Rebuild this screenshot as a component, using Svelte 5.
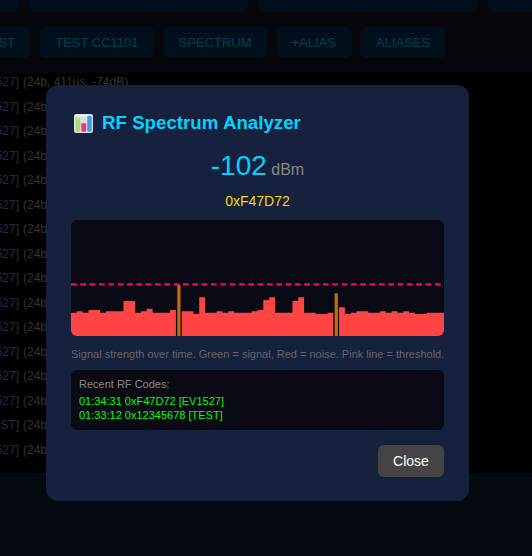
<script>
	// tops of the bars as read off the chart, height = 66 - top / 3
	const tops = [128,124,128,120,120,128,124,124,124,93,93,128,124,116,128,128,128,120,45,124,124,132,82,128,128,124,128,124,128,128,128,124,120,90,82,128,128,128,93,82,128,128,132,132,128,70,112,132,128,124,124,128,128,124,128,124,128,124,128,132,132,128,128,128];
	const signal = [18, 45];
	const barW = 373 / 64;
	const heightOf = (t) => (198 - t) / 3;

	// one path per run of noise bars, so no seams show between neighbours
	const noisePath = () => {
		let d = '';
		let open = false;
		tops.forEach((t, i) => {
			const x = i * barW;
			if (signal.includes(i)) {
				if (open) d += `L${x} 116Z`;
				open = false;
				return;
			}
			const y = 116 - heightOf(t);
			d += open ? `L${x} ${y}L${x + barW} ${y}` : `M${x} 116L${x} ${y}L${x + barW} ${y}`;
			open = true;
		});
		return d + 'L373 116Z';
	};
	const noise = noisePath();
	const hits = signal.map((i) => ({ x: i * barW, h: heightOf(tops[i]) }));

	const buttons = ['TEST', 'TEST CC1101', 'SPECTRUM', '+ALIAS', 'ALIASES'];
	const tags = ['EV1527','EV1527','EV1527','EV1527','EV1527','EV1527','EV1527','EV1527','EV1527','EV1527','EV1527','EV1527','EV1527','EV1527','TEST','EV1527'];
	const codes = ['01:34:31 0xF47D72 [EV1527]', '01:33:12 0x12345678 [TEST]'];
</script>

<div class="page">
	<div class="cards">
		<div class="card"></div>
		<div class="card"></div>
		<div class="card"></div>
		<div class="card"></div>
	</div>

	<div class="buttons">
		{#each buttons as b}
			<button class="btn">{b}</button>
		{/each}
	</div>

	<div class="log">
		<div class="rows">
			{#each tags as tag}
				<div class="row">
					<span class="tag"><span>[{tag}]</span></span>
					<span class="meta">(24b, 411us, -74dB)</span>
				</div>
			{/each}
		</div>
	</div>

	<div class="overlay">
		<div class="modal">
			<h3 class="title">
				<svg class="emoji" viewBox="0 0 19 19" width="19" height="19">
					<rect x="0" y="0" width="19" height="19" rx="2.5" fill="#dcdde6"/>
					<rect x="0.5" y="0.8" width="18" height="1.6" fill="#f4f4f8"/>
					<rect x="1.7" y="4" width="4.6" height="13.7" rx="1" fill="#a3e26c"/>
					<rect x="7.3" y="9.3" width="5" height="8.4" rx="0.6" fill="#ee3a7c"/>
					<rect x="13.3" y="1.7" width="4.4" height="16" rx="1" fill="#3f9be8"/>
				</svg>
				RF Spectrum Analyzer
			</h3>

			<div class="reading"><span class="dbm">-102</span> <span class="unit">dBm</span></div>
			<div class="hex">0xF47D72</div>

			<div class="chart">
				<svg viewBox="0 0 373 116" width="373" height="116">
					<path d={noise} fill="#ff4444"/>
					{#each hits as hit}
						<rect x={hit.x + 1.4} y={116 - hit.h} width="3.2" height={hit.h} fill="#c96c08"/>
					{/each}
					<line x1="0" y1="64.4" x2="373" y2="64.4" stroke="#ff0066" stroke-width="2.2" stroke-dasharray="5.8 3.53"/>
				</svg>
			</div>

			<p class="caption">Signal strength over time. Green = signal, Red = noise. Pink line = threshold.</p>

			<div class="recent">
				<div class="recent-head">Recent RF Codes:</div>
				{#each codes as c}
					<div class="code">{c}</div>
				{/each}
			</div>

			<div class="actions">
				<button class="close">Close</button>
			</div>
		</div>
	</div>
</div>

<style>
	:global(html) {
		background: #0e1a30;
	}
	:global(body) {
		margin: 0;
		height: 556px;
		overflow: hidden;
		font-family: "Liberation Sans", Arial, sans-serif;
	}

	.page {
		position: relative;
		height: 556px;
		overflow: hidden;
		background: linear-gradient(180deg, #18182c, #12223e);
	}

	.cards {
		display: grid;
		grid-template-columns: 220px 220px 218px 220px;
		gap: 10px;
		margin-left: -201px;
		height: 12px;
	}
	.card {
		background: #0c3358;
		border-radius: 0 0 8px 8px;
	}

	.buttons {
		display: flex;
		gap: 10px;
		margin: 15px 0 0 -33px;
	}
	.btn {
		flex: none;
		height: 31px;
		padding: 0 15px;
		border: none;
		border-radius: 6px;
		background: #0c3358;
		color: #00d4ff;
		font: 13px "Liberation Sans", Arial, sans-serif;
	}

	.log {
		height: 400px;
		margin-top: 15px;
		background: #000;
		overflow: hidden;
	}
	.rows {
		margin-top: -3px;
	}
	.row {
		display: flex;
		align-items: center;
		gap: 4px;
		height: 24.5px;
		font-size: 12px;
		white-space: nowrap;
		color: #aaa;
	}
	.tag {
		flex: none;
		width: 19px;
		display: flex;
		justify-content: flex-end;
		color: #9685e6;
	}
	.tag span {
		flex: none;
	}

	.overlay {
		position: absolute;
		inset: 0;
		background: rgba(0, 0, 0, 0.7);
		padding: 85px 0 0 46px;
		box-sizing: border-box;
	}
	.modal {
		width: 423px;
		height: 416px;
		box-sizing: border-box;
		padding: 25px;
		background: #16213e;
		border-radius: 12px;
	}

	.title {
		display: flex;
		align-items: center;
		gap: 9px;
		height: 26px;
		margin: 0 0 0 3px;
		font-size: 18.72px;
		font-weight: bold;
		color: #00d4ff;
	}
	.emoji {
		flex: none;
	}

	.reading {
		margin-top: 13px;
		height: 34px;
		line-height: 34px;
		text-align: center;
		font-size: 16px;
		color: #888;
	}
	.dbm {
		font-size: 28px;
		color: #00d4ff;
	}

	.hex {
		margin-top: 10px;
		text-align: center;
		font-size: 14px;
		line-height: 16px;
		color: #ffd700;
	}

	.chart {
		height: 116px;
		margin-top: 11px;
		background: #0a0a14;
		border-radius: 6px;
		overflow: hidden;
	}
	.chart svg {
		display: block;
	}

	.caption {
		margin: 12px 0 0;
		font-size: 11px;
		line-height: 13px;
		color: #666;
		white-space: nowrap;
	}

	.recent {
		margin-top: 9px;
		height: 60px;
		box-sizing: border-box;
		padding: 8px;
		background: #0a0a14;
		border-radius: 6px;
		font-size: 11px;
		line-height: 13px;
	}
	.recent-head {
		color: #888;
		margin-bottom: 3px;
	}
	.code {
		color: #00ff00;
		line-height: 14px;
	}

	.actions {
		display: flex;
		justify-content: flex-end;
		margin-top: 15px;
	}
	.close {
		width: 66px;
		height: 32px;
		padding: 0;
		border: none;
		border-radius: 6px;
		background: #444;
		color: #fff;
		font: 14px "Liberation Sans", Arial, sans-serif;
	}
</style>
